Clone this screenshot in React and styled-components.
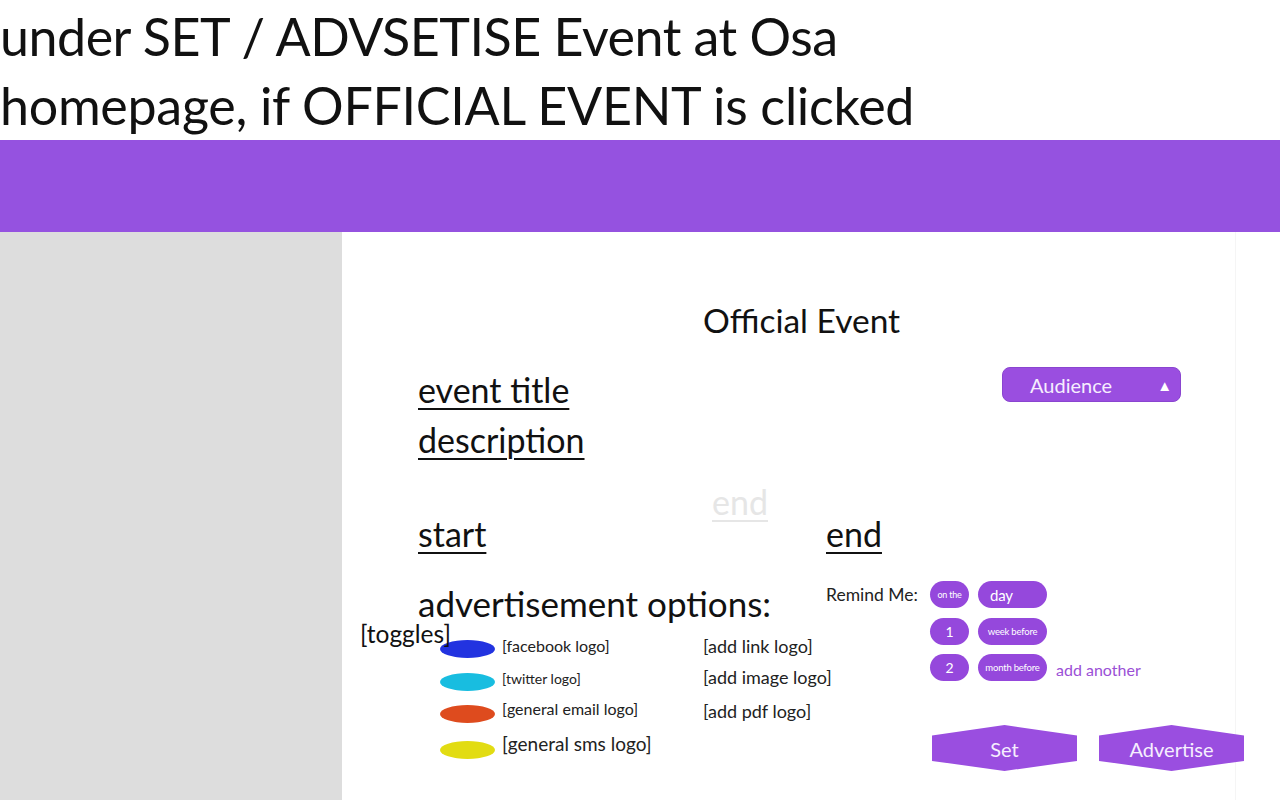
import React from "react";
import styled, { createGlobalStyle } from "styled-components";

const Global = createGlobalStyle`
  html, body { margin: 0; padding: 0; background: #ffffff; }
  body { font-family: "Lato", "Open Sans", sans-serif; color: #111; overflow: hidden; }
  * { box-sizing: border-box; }
`;

const Page = styled.div`
  width: 1280px;
  height: 800px;
  display: flex;
  flex-direction: column;
  overflow: hidden;
`;

const Heading = styled.header`
  height: 140px;
  padding-top: 2px;
`;

const HeadLine = styled.div`
  font-size: 52px;
  line-height: 69px;
  white-space: nowrap;
  letter-spacing: ${(p) => p.$ls || -0.5}px;
`;

const Banner = styled.div`
  height: 92px;
  background: #9552e0;
`;

const Main = styled.div`
  flex: 1;
  display: flex;
`;

const Sidebar = styled.aside`
  width: 342px;
  background: #dddddd;
`;

const Panel = styled.section`
  width: 894px;
  border-right: 1px solid #f5f5f5;
  display: flex;
  flex-direction: column;
`;

const PanelTitle = styled.h1`
  margin: 68px 0 0 361px;
  font-size: 33.5px;
  font-weight: 400;
  line-height: 40px;
`;

const TopRow = styled.div`
  margin-top: 25px;
  display: flex;
  align-items: flex-start;
`;

const FieldColumn = styled.div`
  padding-left: 76px;
  display: flex;
  flex-direction: column;
`;

const Field = styled.span`
  font-size: 34px;
  line-height: ${(p) => p.$lh || 50}px;
  text-decoration: underline;
  text-decoration-thickness: 2px;
  text-underline-offset: 5px;
  color: ${(p) => (p.$faint ? "#e6e6e6" : "#111")};
  white-space: nowrap;
`;

const Dropdown = styled.button`
  margin: 2px 54px 0 auto;
  width: 179px;
  height: 35px;
  border: 1px solid #8a45d0;
  border-radius: 8px;
  background: #9a4ee0;
  color: #f6eefe;
  font-family: "Lato", sans-serif;
  font-size: 20px;
  display: flex;
  align-items: center;
  justify-content: space-between;
  padding: 0 8px 0 27px;
`;

const Caret = styled.span`
  font-size: 15px;
  color: #ffffff;
`;

const FaintRow = styled.div`
  margin-top: 21px;
  padding-left: 370px;
  display: flex;
`;

const DateRow = styled.div`
  display: grid;
  grid-template-columns: 408px auto;
  padding-left: 76px;
`;

const Lower = styled.div`
  margin-top: 24px;
  display: flex;
  align-items: flex-start;
`;

const LeftCol = styled.div`
  width: 343px;
  margin-left: 18px;
  display: flex;
  flex-direction: column;
`;

const OptionsTitle = styled.div`
  margin-top: 9px;
  padding-left: 58px;
  font-size: 35px;
  line-height: 40px;
  white-space: nowrap;
`;

const TogglesLabel = styled.div`
  margin-top: -3px;
  font-size: 24.5px;
  line-height: 28px;
  position: relative;
  z-index: 1;
`;

const ToggleList = styled.div`
  margin-top: -15px;
  padding-left: 80px;
  display: flex;
  flex-direction: column;
`;

const ToggleRow = styled.div`
  height: 32px;
  margin-top: ${(p) => p.$mt || 0}px;
  display: flex;
  align-items: center;
  gap: 7px;
`;

const Toggle = styled.span`
  width: 55px;
  height: 18px;
  border-radius: 50%;
  background: ${(p) => p.$color};
  flex: none;
`;

const ToggleText = styled.span`
  font-size: ${(p) => p.$size}px;
  margin-bottom: ${(p) => p.$lift}px;
  white-space: nowrap;
  color: #222;
`;

const MidCol = styled.div`
  width: 123px;
  padding-top: 56px;
  display: flex;
  flex-direction: column;
`;

const AddItem = styled.div`
  font-size: 18px;
  line-height: 32px;
  margin-top: ${(p) => p.$mt || 0}px;
  white-space: nowrap;
  color: #222;
`;

const RightCol = styled.div`
  display: flex;
  flex-direction: column;
`;

const RemindRow = styled.div`
  margin-top: 7px;
  display: flex;
  align-items: flex-start;
`;

const RemindLabel = styled.div`
  width: 104px;
  font-size: 17.5px;
  line-height: 28px;
  color: #222;
`;

const PillGrid = styled.div`
  display: grid;
  grid-template-columns: 39px 69px auto;
  grid-auto-rows: 27px;
  column-gap: 9px;
  row-gap: 9.5px;
  align-items: center;
`;

const Pill = styled.div`
  height: 27px;
  border-radius: 14px;
  background: #9548dc;
  color: #ffffff;
  font-size: ${(p) => p.$size}px;
  display: flex;
  align-items: center;
  justify-content: ${(p) => (p.$left ? "flex-start" : "center")};
  padding-left: ${(p) => (p.$left ? 12 : 0)}px;
  white-space: nowrap;
  letter-spacing: -0.2px;
`;

const AddAnother = styled.span`
  font-size: 16px;
  color: #9b4fd6;
  white-space: nowrap;
  margin-top: 3px;
`;

const ButtonRow = styled.div`
  margin: 44px 0 0 106px;
  display: flex;
  gap: 22px;
`;

const HexButton = styled.button`
  width: 145px;
  height: 46px;
  border: none;
  background: #9a4ee0;
  color: #f6eefe;
  font-family: "Lato", sans-serif;
  font-size: 20px;
  padding-top: 2px;
  clip-path: polygon(0 23%, 50% 0, 100% 23%, 100% 78%, 50% 100%, 0 78%);
`;

const toggles = [
  { color: "#2233e0", text: "[facebook logo]", size: 16, lift: 8, mt: 0 },
  { color: "#18bde0", text: "[twitter logo]", size: 14, lift: 8, mt: 1 },
  { color: "#de4b1e", text: "[general email logo]", size: 16, lift: 12, mt: 0 },
  { color: "#e2dc12", text: "[general sms logo]", size: 19, lift: 14, mt: 4 },
];

export default function App() {
  return (
    <Page>
      <Global />
      <Heading>
        <HeadLine>under SET / ADVSETISE Event at Osa</HeadLine>
        <HeadLine $ls={-0.3}>homepage, if OFFICIAL EVENT is clicked</HeadLine>
      </Heading>
      <Banner />
      <Main>
        <Sidebar />
        <Panel>
          <PanelTitle>Official Event</PanelTitle>
          <TopRow>
            <FieldColumn>
              <Field>event title</Field>
              <Field>description</Field>
            </FieldColumn>
            <Dropdown>
              Audience <Caret>▲</Caret>
            </Dropdown>
          </TopRow>
          <FaintRow>
            <Field $faint $lh={32}>end</Field>
          </FaintRow>
          <DateRow>
            <Field $lh={32}>start</Field>
            <Field $lh={32}>end</Field>
          </DateRow>
          <Lower>
            <LeftCol>
              <OptionsTitle>advertisement options:</OptionsTitle>
              <TogglesLabel>[toggles]</TogglesLabel>
              <ToggleList>
                {toggles.map((t) => (
                  <ToggleRow key={t.text} $mt={t.mt}>
                    <Toggle $color={t.color} />
                    <ToggleText $size={t.size} $lift={t.lift}>{t.text}</ToggleText>
                  </ToggleRow>
                ))}
              </ToggleList>
            </LeftCol>
            <MidCol>
              <AddItem>[add link logo]</AddItem>
              <AddItem $mt={-1}>[add image logo]</AddItem>
              <AddItem $mt={2}>[add pdf logo]</AddItem>
            </MidCol>
            <RightCol>
              <RemindRow>
                <RemindLabel>Remind Me:</RemindLabel>
                <PillGrid>
                  <Pill $size={9}>on the</Pill>
                  <Pill $size={15} $left>day</Pill>
                  <span />
                  <Pill $size={14}>1</Pill>
                  <Pill $size={9.5}>week before</Pill>
                  <span />
                  <Pill $size={14}>2</Pill>
                  <Pill $size={9.5}>month before</Pill>
                  <AddAnother>add another</AddAnother>
                </PillGrid>
              </RemindRow>
              <ButtonRow>
                <HexButton>Set</HexButton>
                <HexButton>Advertise</HexButton>
              </ButtonRow>
            </RightCol>
          </Lower>
        </Panel>
      </Main>
    </Page>
  );
}
